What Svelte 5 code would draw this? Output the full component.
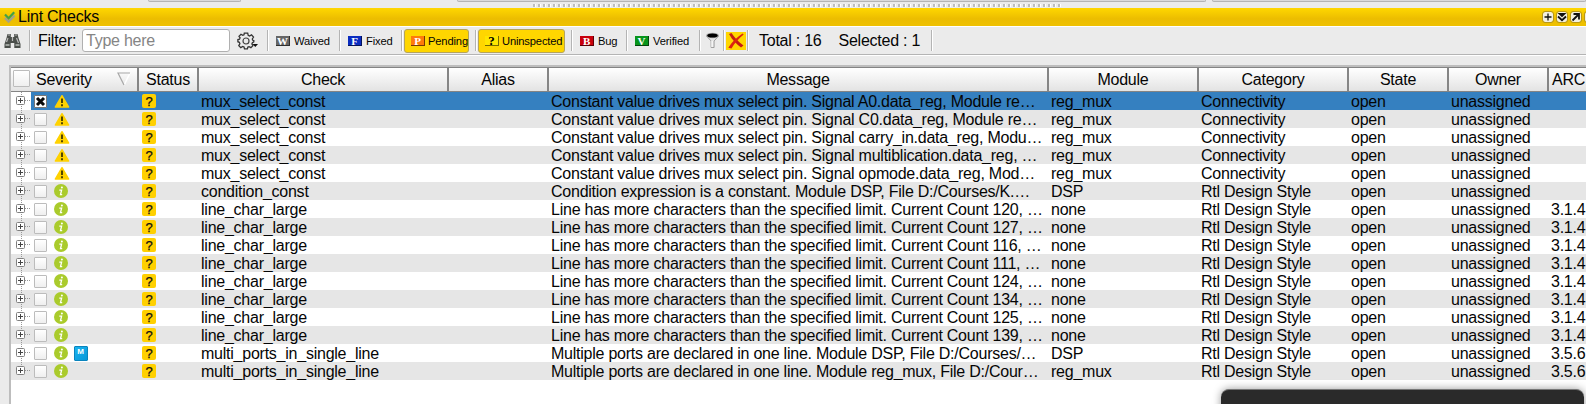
<script>
  const mux = (signal, tail) => ({
    sev: 'warn', check: 'mux_select_const',
    msg: `Constant value drives mux select pin. Signal ${signal}.data_reg, ${tail}…`,
    mod: 'reg_mux', cat: 'Connectivity', arc: ''
  });
  const line = (n) => ({
    sev: 'info', check: 'line_char_large',
    msg: `Line has more characters than the specified limit. Current Count ${n}, …`,
    mod: 'none', cat: 'Rtl Design Style', arc: '3.1.4'
  });
  const rows = [
    mux('A0', 'Module re'), mux('C0', 'Module re'), mux('carry_in', 'Modu'),
    mux('multiblication', ''), mux('opmode', 'Mod'),
    { sev: 'info', check: 'condition_const', msg: 'Condition expression is a constant. Module DSP, File D:/Courses/K.…', mod: 'DSP', cat: 'Rtl Design Style', arc: '' },
    ...[120, 127, 116, 111, 124, 134, 125, 139].map(line),
    { sev: 'info', m: true, check: 'multi_ports_in_single_line', msg: 'Multiple ports are declared in one line. Module DSP, File D:/Courses/…', mod: 'DSP', cat: 'Rtl Design Style', arc: '3.5.6' },
    { sev: 'info', check: 'multi_ports_in_single_line', msg: 'Multiple ports are declared in one line. Module reg_mux, File D:/Cour…', mod: 'reg_mux', cat: 'Rtl Design Style', arc: '3.5.6' }
  ];
  const heads = ['Check', 'Alias', 'Message', 'Module', 'Category', 'State', 'Owner'];
  const states = [
    { l: 'W', t: 'Waived', w: 70, c: '#666' },
    { l: 'F', t: 'Fixed', w: 60, c: '#0a2cc0' },
    { l: 'P', t: 'Pending', w: 72, c: '#ff7a0a', on: 65 },
    { l: '?', t: 'Uninspected', w: 94, c: '#ffe600', on: 87 },
    { l: 'B', t: 'Bug', w: 53, c: '#c8000c' },
    { l: 'V', t: 'Verified', w: 71, c: '#08951c' }
  ];
</script>

<div class="page">
  <div class="strip">
    <i class="t1"></i><i class="t2"></i><i class="t3"></i>
    <b class="grip"></b>
  </div>

  <div class="title">
    <svg width="12" height="12" viewBox="0 0 12 12"><path d="M1 7l3.600 3.500 6-6" stroke="#a3a28a" stroke-width="2.400" fill="none"/><path d="M1 3.500l3.600 3.700 5.600-6" stroke="#43a047" stroke-width="2.200" fill="none"/></svg>
    <span>Lint Checks</span>
    <div class="wins">
      <svg viewBox="0 0 10 10"><path d="M5 1.500v7M1.500 5h7" stroke="#111" stroke-width="1.300"/></svg>
      <svg viewBox="0 0 10 10"><path d="M.5 1h9L5 5.300z" fill="#111"/><path d="M1 4.500l4 3.700 4-3.700" stroke="#111" stroke-width="1.800" fill="none"/></svg>
      <svg viewBox="0 0 10 10"><path d="M1.500 8.500l6-6M2.500 2h5.500v5.500" stroke="#111" stroke-width="1.800" fill="none"/></svg>
      <svg viewBox="0 0 10 10"></svg>
    </div>
  </div>

  <div class="bar">
    <div class="bino">
      <svg width="17" height="16" viewBox="0 0 17 16"><path d="M3.500 1h3.300v3h3.400V1h3.300l1 4 2 6v4H10.300v-5H6.700v5H.5v-4l2-6z" fill="#4b4f4b"/><path d="M4 2h2M11 2h2M2.500 9l1.500-4M8.500 4v4M12.500 5l2 5" stroke="#bbb" stroke-width="1.200"/><path d="M1.500 12h4M11.500 12h4" stroke="#9da29d" stroke-width="2"/></svg>
    </div>
    <s></s>
    <div class="filter">
      <label for="f">Filter:</label>
      <input id="f" placeholder="Type here" />
      <svg class="gear" width="22" height="18" viewBox="0 0 22 18"><path d="M7.300 1.200h3.400l.5 2.200 1.300.6 2-1.100 2 2.200-1.200 1.900.5 1.300 1 .2v1.400l-1.400.8-.5 1.200 1 1.700-2 2-1.800-1-1.200.5-.5 1.800H7.500L7 15l-1.300-.5-1.900 1.100-2-2 1.100-2-.6-1.300L.9 9.700V7.600l1.600-.4.6-1.300L2 4.300 4 2.300l1.800 1L7 2.800z" fill="none" stroke="#333" stroke-width="1.300"/><circle cx="9" cy="9" r="3" fill="none" stroke="#444" stroke-width="1.200"/><path d="M15.500 12h5.500L18.300 15z" fill="#111"/></svg>
    </div>
    <s></s>
    {#each states as x}
      <div class="slot" style:width="{x.w}px">
        <div class="btn" class:on={x.on} style:width={x.on ? x.on + 'px' : 'auto'}>
          <span class="ico" class:q={x.l === '?'} style:background={x.c}>{x.l}</span>
          <span>{x.t}</span>
        </div>
      </div>
      <s></s>
    {/each}
    <div class="tool">
      <svg width="15" height="17" viewBox="0 0 15 17"><path d="M1.500 4l4.600 5v6.500h3V9l4.500-5z" fill="#e6e6e6" stroke="#999" stroke-width=".9"/><path d="M7 9v6" stroke="#fff" stroke-width="1.200"/><ellipse cx="7.500" cy="3.500" rx="6.500" ry="2.800" fill="#aaa"/><ellipse cx="7.500" cy="3.500" rx="5.200" ry="2" fill="#000"/></svg>
    </div>
    <s></s>
    <div class="tool">
      <svg class="cross" width="20" height="18" viewBox="0 0 20 18"><path d="M3 2l2.500-1c3 4.500 6.500 8.500 12 12.500l-2.500 2C11 12.500 6.500 8.500 3 2z" fill="#c61c12"/><path d="M16.500 1.500l1.200 1C13 6.500 8.500 11 5.500 16.500l-3.200-.8C6 10 11 5 16.500 1.500z" fill="#dc2410"/></svg>
    </div>
    <s></s>
    <div class="totals"><span>Total : 16</span><span>Selected : 1</span></div>
    <s></s>
  </div>

  <div class="frame">
    <div class="row head">
      <div class="h sev"><span class="cb big"></span><span>Severity</span>
        <svg width="14" height="14" viewBox="0 0 14 14"><path d="M13 1L7.200 13" stroke="#fff" stroke-width="1.500" fill="none"/><path d="M13 1H1l6 12" stroke="#a8a8a8" stroke-width="1.200" fill="none"/></svg>
      </div>
      <div class="h">Status</div>
      {#each heads as h}<div class="h">{h}</div>{/each}
      <div class="h arc">ARC</div>
    </div>
    {#each rows as r, i}
      <div class="row data" class:sel={i === 0} class:alt={i % 2}>
        <div class="tree">
          <svg class="node" width="20" height="18" viewBox="0 0 20 18"><path d={i === rows.length - 1 ? 'M10.500 0V5' : 'M10.500 0V18'} stroke="#999" stroke-dasharray="1 1"/><path d="M14 8.500H20" stroke="#999" stroke-dasharray="1 1"/><rect x="5.500" y="4.500" width="8" height="8" rx="1" fill="#fff" stroke="#808080"/><path d="M7 8.500h5M9.500 6v5" stroke="#444"/></svg>
          <div class="marks">
            <span class="cb" class:ck={i === 0}>
              {#if i === 0}<svg width="11" height="11" viewBox="0 0 11 11"><path d="M2 2l7 7M9 2l-7 7" stroke="#0a0a0a" stroke-width="3"/></svg>{/if}
            </span>
            {#if r.sev === 'warn'}
              <svg width="16" height="14" viewBox="0 0 16 14"><path d="M8 1.700L14.700 13H1.300z" fill="#ffd200" stroke="#ffd200" stroke-width="1.400" stroke-linejoin="round"/><path d="M8 4.500v4.500M8 10.300v1.900" stroke="#4a3f00" stroke-width="1.900"/></svg>
            {:else}
              <svg width="16" height="14" viewBox="0 0 16 14"><circle cx="7" cy="7" r="7" fill="#aacb2c"/><path d="M5.300 6.200h2.300L6.500 10.700h1.700" stroke="#fff" stroke-width="1.300" fill="none"/><circle cx="7.900" cy="3.500" r="1" fill="#fff"/></svg>
            {/if}
            {#if r.m}<span class="m">M</span>{/if}
          </div>
        </div>
        <div class="st"><span class="badge">?</span></div>
        <div>{r.check}</div><div></div><div>{r.msg}</div><div>{r.mod}</div><div>{r.cat}</div><div>open</div><div>unassigned</div><div>{r.arc}</div>
      </div>
    {/each}
  </div>
  <div class="popup"></div>
</div>

<style>
  :global(body) { overflow: hidden; }
  .page { position: relative; width: 1586px; height: 404px; overflow: hidden; background: #ebebeb; color: #050505; font: 16px/18px "Liberation Sans", Arial, sans-serif; letter-spacing: -.24px; display: flex; flex-direction: column; white-space: nowrap; }
  .page * { box-sizing: border-box; }
  .strip { height: 8px; flex: none; display: flex; position: relative; }
  .strip i { height: 2px; border: 1px solid #b4b4b4; border-top: 0; border-radius: 0 0 3px 3px; background: #dadada; }
  .t1 { width: 93px; margin-left: 148px; }
  .t2 { width: 749px; margin-left: 216px; }
  .t3 { flex: 1; margin-left: 6px; }
  .grip { position: absolute; left: 533px; top: 4px; width: 528px; height: 3px; background: repeating-linear-gradient(90deg, #bdbdbd 0 2px, #fff 2px 3px, #ebebeb 3px 5px); }
  .title { height: 18px; flex: none; display: flex; align-items: center; background: linear-gradient(#ffd700, #ecbd00 60%, #efc100); padding: 0 0 1px 4px; }
  .title > span { margin-left: 2px; line-height: 17px; }
  .wins { margin-left: auto; display: flex; gap: 4px; margin-right: -9px; }
  .wins svg { width: 10px; height: 10px; background: #f3f0df; border-radius: 2px; outline: 1px solid #b89818; outline-offset: -.5px; }
  .bar { height: 30px; flex: none; display: flex; align-items: center; border-top: 1px solid #fff; border-bottom: 1px solid #fff; box-shadow: inset 0 -1px #b4b4b4; padding-bottom: 1px; }
  s { width: 2px; height: 21px; flex: none; border-left: 1px solid #b4b4b4; border-right: 1px solid #fff; }
  .bino { width: 29px; padding-left: 4px; display: flex; }
  .filter { width: 236px; display: flex; align-items: center; padding-left: 7px; }
  label { width: 44px; }
  input { width: 148px; height: 23px; border: 1px solid #b0b0b0; border-radius: 3px; padding: 0 3px; font: inherit; letter-spacing: inherit; outline: 0; background: #fff; }
  input::placeholder { color: #858585; opacity: 1; }
  .gear { margin-left: 7px; }
  .slot { display: flex; align-items: center; flex: none; }
  .btn { height: 24px; margin-left: 1px; padding-left: 6px; display: flex; align-items: center; gap: 4px; font-size: 11.2px; letter-spacing: -.16px; flex: none; }
  .on { background: #ffd600; border: 1px solid #b5a45c; border-radius: 3px; padding-left: 6px; gap: 3px; }
  .ico { width: 14px; height: 10px; flex: none; color: #fff; font: bold 11px/10px "Liberation Serif", serif; text-align: center; border-right: 1px solid #0008; border-bottom: 1px solid #0008; }
  .ico.q { color: #000; font-size: 13px; }
  .tool { width: 22px; display: flex; justify-content: center; }
  .cross { background: #ffd600; }
  .totals { width: 182px; padding-left: 10px; display: flex; gap: 17px; }
  .frame { flex: 1; min-height: 0; margin: 9px 0 0 9px; border: 2px solid #bdbdbd; border-right: 0; border-bottom: 0; background: #fff; overflow: hidden; }
  .row { display: grid; grid-template-columns: 128px 60px 250px 100px 500px 150px 150px 100px 100px 128px; }
  .head { height: 25px; background: linear-gradient(#fff, #e3e3e3); border-top: 1px solid #848484; border-bottom: 1px solid #848484; }
  .h { border-right: 2px solid #858585; text-align: center; line-height: 23px; height: 23px; }
  .sev { display: flex; padding-left: 2px; align-items: center; }
  .sev span + span { margin-left: 6px; }
  .sev svg { margin: -2px 6px 0 auto; }
  .arc { text-align: left; padding-left: 3px; }
  .data { height: 18px; }
  .data > div { padding-left: 2px; line-height: 19px; height: 18px; overflow: hidden; }
  .alt { background: #e6e6e6; }
  .sel > div { background: #3580c0; }
  .sel > .tree { background: linear-gradient(90deg, #fff 20px, #3580c0 20px); }
  .data > .tree { display: flex; padding: 0; }
  .node { flex: none; }
  .marks { display: flex; align-items: center; padding-left: 3px; height: 18px; }
  .marks svg { display: block; flex: none; }
  .marks > svg { margin-left: 7px; }
  .cb { width: 13px; height: 13px; flex: none; border: 1px solid #bcbcbc; border-radius: 1px; background: linear-gradient(#fff, #efefef); }
  .marks .cb { margin-top: 1px; }
  .cb.big { width: 17px; height: 17px; margin-top: -3px; }
  .cb.ck { border-color: #777; background: #fff; }
  .data > .st { padding: 2px 0 0 3px; }
  .badge { display: block; width: 14px; height: 14px; border-radius: 2px; background: #ffd000; color: #111; font-size: 13px; letter-spacing: 0; -webkit-text-stroke: .25px #111; line-height: 15px; text-align: center; }
  .m { width: 14px; height: 15px; margin: 1px 0 0 4px; background: linear-gradient(135deg, #1bb4f0, #0797d8); border: 1px solid #0a84bd; border-radius: 1px; color: #fff; font: bold 8px/9px "Liberation Sans", sans-serif; text-align: center; padding-right: 1px; }
  .popup { position: absolute; left: 1221px; top: 389px; width: 363px; height: 40px; border-radius: 8px; border-top: 1px solid #777; background: #2a2a2a; box-shadow: 0 0 8px #0006; }
</style>
